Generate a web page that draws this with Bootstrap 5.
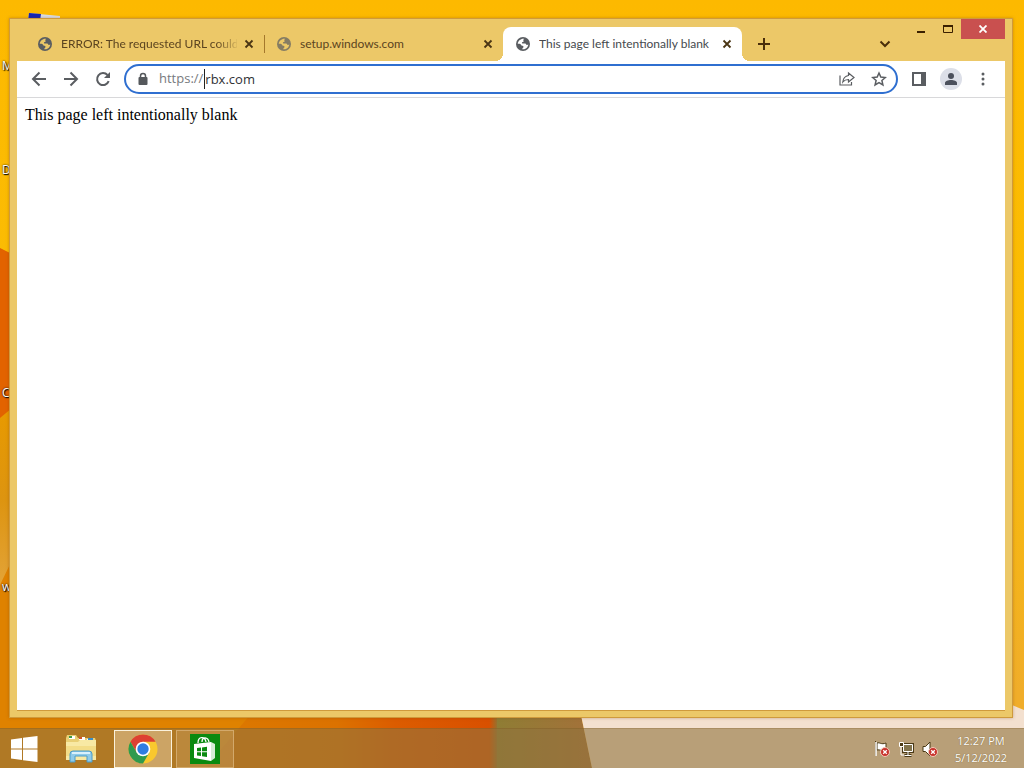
<!DOCTYPE html>
<html lang="en">
<head>
<meta charset="utf-8">
<meta name="viewport" content="width=device-width, initial-scale=1">
<title>Desktop</title>
<link href="https://cdn.jsdelivr.net/npm/bootstrap@5.3.0/dist/css/bootstrap.min.css" rel="stylesheet">
<style>
  body { font-family: "Open Sans", "Noto Sans", sans-serif; font-size: 12px; background: #fbb900; }
  button { background: none; border: 0; padding: 0; color: #5a5d61; }
  svg { display: block; flex: none; }
  .wallpaper { z-index: -1; }
  .desk-labels { left: 2px; color: #fff; line-height: 16px; text-shadow: 1px 1px 1px #000, 0 0 2px #000; }
  .desk-label { left: 0; }
  .desk-icon { left: 28px; top: 12px; }

  .frame { position: relative; margin: 18px 11px 10px 9px; padding: 0 7px; background: #ecc868; border: 1px solid #cf9a3c; box-shadow: 0 0 3px rgba(120, 60, 0, .35); }
  .strip { height: 42px; padding-left: 8px; }
  .win-tab { flex: 0 1 239px; min-width: 0; height: 34px; padding: 0 7px 0 13px; font-family: Lato, sans-serif; color: #5b4420; border-radius: 8px 8px 0 0; position: relative; }
  .win-tab.current { background: #fff; color: #45494d; }
  .win-tab.current::before, .win-tab.current::after { content: ""; position: absolute; bottom: 0; width: 8px; height: 8px; }
  .win-tab.current::before { left: -8px; background: radial-gradient(circle at 0 0, transparent 8px, #fff 8px); }
  .win-tab.current::after { right: -8px; background: radial-gradient(circle at 100% 0, transparent 8px, #fff 8px); }
  .win-tab .x { width: 16px; height: 16px; margin-left: 4px; color: #4a3514; }
  .win-tab .site { margin-right: 9px; color: #5a5d61; }
  .win-tab .dim { opacity: .7; }
  .divided::after { content: ""; position: absolute; right: -1px; top: 8px; width: 1px; height: 18px; background: #a4782c; }
  .fade-end { -webkit-mask-image: linear-gradient(90deg, #000 88%, transparent 102%); mask-image: linear-gradient(90deg, #000 88%, transparent 102%); }
  .strip-btn { width: 28px; height: 34px; color: #4a2e0a; }
  .ctl { width: 27px; height: 20px; color: #3a2000; }
  .ctl-close { width: 44px; background: #c9504f; color: #fff; }

  .tools { height: 37px; padding: 0 6px; background: #fff; border-bottom: 1px solid #d8d8da; }
  .tool { width: 32px; height: 32px; }
  .omni { height: 30px; margin: 0 5px; padding: 0 1px 0 11px; border: 2px solid #2f6fd0; border-radius: 15px; font-size: 13px; color: #777a7e; }
  .omni input { border: 0; border-left: 1px solid #222; outline: 0; padding: 0; height: 20px; background: none; color: #303236; }
  .omni label { padding-right: 1px; }
  .padlock { margin-right: 10px; }
  .avatar { width: 22px; height: 22px; background: #dcdfe8; color: #4b505c; }
  .sheet { background: #fff; padding: 8px; font: 16px/18px "Liberation Serif", serif; color: #000; border-bottom: 1px solid #cf9a3c; margin-bottom: 6px; }

  .taskbar { height: 40px; background: rgba(145, 115, 62, .6); border-top: 1px solid rgba(110, 70, 10, .2); gap: 4px; }
  .start { width: 48px; height: 38px; }
  .task { width: 58px; height: 38px; }
  .task.open { border: 1px solid #d3a96b; background: rgba(255, 235, 200, .14); }
  .task.active { border: 1px solid #fbf2dc; background: rgba(255, 240, 215, .36); }
  .tray { width: 24px; height: 32px; }
  .clock { width: 82px; padding-right: 4px; font-size: 11px; line-height: 17px; color: #fff; text-shadow: 0 0 1px #6b5420; }
</style>
</head>
<body class="vh-100 overflow-hidden position-relative d-flex flex-column">

<svg class="wallpaper position-absolute top-0 start-0 w-100 h-100" viewBox="0 0 1024 768" preserveAspectRatio="none" aria-hidden="true">
  <defs>
    <linearGradient id="sky" x1="0" y1="0" x2="0" y2="1"><stop offset="0" stop-color="#fdb900"/><stop offset=".5" stop-color="#fabd05"/><stop offset=".9" stop-color="#f0ad2a"/></linearGradient>
    <linearGradient id="low" x1="0" y1="0" x2="0" y2="1"><stop offset="0" stop-color="#e89a00"/><stop offset=".5" stop-color="#dd9410"/><stop offset="1" stop-color="#e3a43a"/></linearGradient>
    <linearGradient id="red" x1="0" y1="0" x2="1" y2="0"><stop offset="0" stop-color="#dc7900"/><stop offset=".45" stop-color="#dc7200"/><stop offset=".65" stop-color="#dc5c00"/><stop offset=".97" stop-color="#d95000"/><stop offset="1" stop-color="#8f7534"/></linearGradient>
    <linearGradient id="olive" x1="0" y1="0" x2="1" y2="0"><stop offset="0" stop-color="#8f7d34"/><stop offset="1" stop-color="#a4713a"/></linearGradient>
  </defs>
  <rect width="1024" height="768" fill="url(#sky)"/>
  <path d="M0 248 L12 254 V412 L0 420Z" fill="#e26300"/>
  <path d="M0 418 L12 408 V560 L0 590Z" fill="url(#low)"/>
  <path d="M0 585 L12 560 V700 H260 V768 H0Z" fill="#df8200"/>
  <path d="M250 715 H498 V768 H205Z" fill="url(#red)"/>
  <path d="M497 715 H581 L592 768 H497Z" fill="url(#olive)"/>
  <path d="M581 715 H1012 V705 L1024 710 V768 H592Z" fill="#f3e0cf"/>
</svg>
<svg class="desk-icon position-absolute" width="34" height="9" aria-hidden="true"><path d="M1 1l31 3v5H0z" fill="#d9dce4"/><path d="M1 1l12 1-1 7H0z" fill="#1424b4"/></svg>
<div class="desk-labels position-absolute top-0">
  <span class="desk-label position-absolute" style="top:58px">M</span>
  <span class="desk-label position-absolute" style="top:162px">D</span>
  <span class="desk-label position-absolute" style="top:385px">C</span>
  <span class="desk-label position-absolute" style="top:579px">w</span>
</div>

<svg class="d-none" aria-hidden="true">
  <symbol id="globe" viewBox="0 0 16 16"><circle cx="8" cy="8" r="8" fill="currentColor"/><path d="M9.400 2.200C8 2.700 7.800 3.800 8.800 4.300c.2 1.200-.7 1.500-1.900 1.600-.4.900.2 1.500 1 1.500h2.500c1 0 1.500.9 1.500 1.700.9.100 1.700 0 2.200-.5-.3 2.500-1.900 4.600-4.600 5.300-1 .2-1.700.2-2.400 0 0-1.200 1.500-1.400 1.500-2.700 0-.9-.8-1.200-1.700-1.300-1.100-.2-.9-1.300-1.800-1.700-.9-.5-2-.6-3.100-.4C2.200 4.700 5.500 1.600 9.400 2.200z" fill="var(--land)"/></symbol>
  <symbol id="cross" viewBox="0 0 16 16"><path d="M4.500 4.500l7 7m0-7l-7 7" stroke="currentColor" stroke-width="1.800" fill="none"/></symbol>
  <symbol id="alert" viewBox="0 0 10 10"><circle cx="5" cy="5" r="4.500" fill="#c8322c" stroke="#f1c9b8"/><path d="M3.200 3.200l3.600 3.600m0-3.600L3.200 6.800" stroke="#fff" stroke-width="1.300"/></symbol>
</svg>

<main class="frame flex-grow-1 d-flex flex-column">
  <div class="strip d-flex align-items-end flex-shrink-0">
    <div class="win-tab divided d-flex align-items-center">
      <svg width="14" height="14" class="site" style="--land:#ecc868"><use href="#globe"/></svg>
      <span class="flex-fill text-nowrap overflow-hidden fade-end">ERROR: The requested URL could</span>
      <button class="x" aria-label="Close tab"><svg width="16" height="16"><use href="#cross"/></svg></button>
    </div>
    <div class="win-tab d-flex align-items-center">
      <svg width="14" height="14" class="site dim" style="--land:#ecc868"><use href="#globe"/></svg>
      <span class="flex-fill text-nowrap overflow-hidden">setup.windows.com</span>
      <button class="x" aria-label="Close tab"><svg width="16" height="16"><use href="#cross"/></svg></button>
    </div>
    <div class="win-tab current d-flex align-items-center">
      <svg width="14" height="14" class="site" style="--land:#fff"><use href="#globe"/></svg>
      <span class="flex-fill text-nowrap overflow-hidden">This page left intentionally blank</span>
      <button class="x" aria-label="Close tab"><svg width="16" height="16"><use href="#cross"/></svg></button>
    </div>
    <button class="strip-btn ms-2 d-flex align-items-center justify-content-center" aria-label="New tab"><svg width="12" height="12"><path d="M6 0v12M0 6h12" stroke="currentColor" stroke-width="2"/></svg></button>
    <button class="strip-btn ms-auto me-2 d-flex align-items-center justify-content-center" aria-label="Search tabs"><svg width="12" height="8"><path d="M1.500 1.500L6 6l4.500-4.500" fill="none" stroke="currentColor" stroke-width="2"/></svg></button>
    <div class="d-flex align-self-start">
      <button class="ctl d-flex justify-content-center" aria-label="Minimize"><svg width="8" height="14"><path d="M0 12h8v2H0z" fill="currentColor"/></svg></button>
      <button class="ctl d-flex align-items-center justify-content-center" aria-label="Maximize"><svg width="10" height="8"><path d="M.5 1h9v6.500h-9z" fill="none" stroke="currentColor"/><path d="M0 0h10v2H0z" fill="currentColor"/></svg></button>
      <button class="ctl ctl-close d-flex align-items-center justify-content-center" aria-label="Close"><svg width="8" height="8"><path d="M.5 .5l7 7m0-7l-7 7" stroke="currentColor" stroke-width="1.800"/></svg></button>
    </div>
  </div>

  <div class="tools d-flex align-items-center flex-shrink-0">
    <button class="tool d-flex align-items-center justify-content-center" aria-label="Back"><svg width="16" height="16"><path d="M15 8H2M8.500 1.500L2 8l6.500 6.500" fill="none" stroke="currentColor" stroke-width="2"/></svg></button>
    <button class="tool d-flex align-items-center justify-content-center" aria-label="Forward"><svg width="16" height="16"><path d="M1 8h13M7.500 1.500L14 8l-6.500 6.500" fill="none" stroke="currentColor" stroke-width="2"/></svg></button>
    <button class="tool d-flex align-items-center justify-content-center" aria-label="Reload"><svg width="16" height="16"><path d="M13.700 10.200A6 6 0 1 1 12.500 4" fill="none" stroke="currentColor" stroke-width="2"/><path d="M15 1v6H9z" fill="currentColor"/></svg></button>
    <div class="omni flex-grow-1 d-flex align-items-center">
      <svg width="12" height="14" class="padlock"><path d="M3.500 6V4a2.500 2.500 0 0 1 5 0v2" fill="none" stroke="#55585c" stroke-width="1.500"/><rect x="1.500" y="5" width="9" height="8" rx="1" fill="#55585c"/></svg>
      <label for="address">https://</label>
      <input id="address" class="flex-grow-1" type="text" value="rbx.com" spellcheck="false">
      <button class="tool d-flex align-items-center justify-content-center" aria-label="Share"><svg width="16" height="16"><path d="M1 4.500v9.500h11.500v-3M9.500 2l5.500 4.500-5.500 4.500V8.500C7 8.500 5 9.500 3.800 11 4.200 7.500 6.200 5 9.500 4.500z" fill="none" stroke="currentColor" stroke-width="1.200"/></svg></button>
      <button class="tool d-flex align-items-center justify-content-center" aria-label="Bookmark"><svg width="16" height="16"><path d="M8 2l1.800 4.100 4.500.4-3.400 3 1 4.400L8 11.600l-3.900 2.300 1-4.400-3.400-3 4.500-.4z" fill="none" stroke="currentColor" stroke-width="1.500"/></svg></button>
    </div>
    <button class="tool d-flex align-items-center justify-content-center" aria-label="Side panel"><svg width="14" height="14"><path d="M1 1h12v12H1z" fill="none" stroke="currentColor" stroke-width="2"/><path d="M9 1h4v12H9z" fill="currentColor"/></svg></button>
    <button class="tool d-flex align-items-center justify-content-center" aria-label="Profile"><span class="avatar rounded-circle d-flex align-items-center justify-content-center"><svg width="12" height="12"><circle cx="6" cy="3" r="3" fill="currentColor"/><path d="M0 12v-2c0-2 3-3 6-3s6 1 6 3v2z" fill="currentColor"/></svg></span></button>
    <button class="tool d-flex align-items-center justify-content-center" aria-label="Menu"><svg width="4" height="14"><g fill="currentColor"><circle cx="2" cy="2" r="1.500"/><circle cx="2" cy="7" r="1.500"/><circle cx="2" cy="12" r="1.500"/></g></svg></button>
  </div>

  <div class="sheet flex-grow-1">This page left intentionally blank</div>
</main>

<footer class="taskbar d-flex align-items-center flex-shrink-0">
  <button class="start d-flex align-items-center justify-content-center" aria-label="Start"><svg width="28" height="28" viewBox="0 0 28 28"><path d="M1 4.500L12 3v10.500H1zM13 2.800L27.500 1v12.500H13zM1 14.500h11V25L1 23.500zM13 14.500h14.500V27L13 25.200z" fill="#fff"/></svg></button>
  <button class="task d-flex align-items-center justify-content-center" aria-label="File Explorer"><svg width="32" height="30" viewBox="0 0 32 30"><path d="M1 4l1-3h9l2 3h17l1 3v19H1z" fill="#e9cf74"/><path d="M4 2h6v3H4zM14 3h6v3h-6zM22 5h6v2h-6z" fill="#fff"/><path d="M4 2h3v2H4z" fill="#3c9a4a"/><path d="M14 3h3v2h-3z" fill="#d3552b"/><path d="M23 4h5v2h-5z" fill="#3b8fc9"/><path d="M1 8h12l2-2h16v20H1z" fill="#f8e9a4"/><path d="M1 12h30v10H1z" fill="#f3dd88"/><path d="M5 28V20q0-3 3-3h16q3 0 3 3v8h-5v-6H10v6z" fill="#8fcbe9" stroke="#4d9cc7"/><path d="M7 19h18" stroke="#d9f1fc" stroke-width="2"/></svg></button>
  <button class="task active d-flex align-items-center justify-content-center" aria-label="Chrome"><svg width="30" height="30" viewBox="0 0 30 30"><circle cx="15" cy="15" r="14.500" fill="#f9c82e"/><path d="M2.440 7.750A14.500 14.500 0 0 1 27.560 7.750L15 7.750 8.700 18.600z" fill="#dd4033"/><path d="M2.440 7.750A14.500 14.500 0 0 0 15 29.500L21.300 18.600 8.700 18.600z" fill="#2f9a4e"/><circle cx="15" cy="15" r="7.300" fill="#fff"/><circle cx="15" cy="15" r="5.700" fill="#2f7de1"/></svg></button>
  <button class="task open d-flex align-items-center justify-content-center" aria-label="Store"><svg width="30" height="30" viewBox="0 0 30 30"><path d="M0 0h30v30H0z" fill="#0a8a10"/><path d="M4 10l17-2v19L4 24z" fill="#fff"/><path d="M21 8l4 2v14l-4 3z" fill="#d5ecd6"/><path d="M8 9c0-7 7-7 8-1M12 8c0-6 6-5 7 0" fill="none" stroke="#fff" stroke-width="1.300"/><path d="M7 14l4-.5v3.700H7zM12 13.400l5-.6v4.400h-5zM7 18.200h4v3.900l-4-.5zM12 18.200h5V23l-5-.7z" fill="#0a8a10"/></svg></button>

  <div class="ms-auto d-flex align-items-center">
    <button class="tray d-flex align-items-center justify-content-center" aria-label="Action Center"><svg width="16" height="16"><path d="M1.500 0v15M3 2c3-1 4 2 9 0v7c-4 2-6-1-9 0z" fill="#fff" stroke="#4b3a16"/><path d="M2 1v14" stroke="#fff" stroke-width="1.500"/><use href="#alert" x="6" y="6" width="10" height="10"/></svg></button>
    <button class="tray d-flex align-items-center justify-content-center" aria-label="Network"><svg width="16" height="16"><path d="M5.500 3.500h9v7h-9zM10 11v3M6.500 14.500h7" fill="none" stroke="#4b3a16" stroke-width="3"/><path d="M5.500 3.500h9v7h-9z" fill="#82734c" stroke="#fff"/><path d="M10 11v3M6.500 14.500h7M3 6v8h3" fill="none" stroke="#fff"/><path d="M1.500 1.500h4v4h-4z" fill="#4b3a16" stroke="#fff"/></svg></button>
    <button class="tray d-flex align-items-center justify-content-center" aria-label="Volume"><svg width="16" height="16"><path d="M1 5.500h2.500L8 1v14l-4.500-4.500H1z" fill="#fff" stroke="#4b3a16"/><use href="#alert" x="6" y="6" width="10" height="10"/></svg></button>
    <div class="clock text-center">12:27 PM<br>5/12/2022</div>
  </div>
</footer>

<script src="https://cdn.jsdelivr.net/npm/bootstrap@5.3.0/dist/js/bootstrap.bundle.min.js"></script>
</body>
</html>
